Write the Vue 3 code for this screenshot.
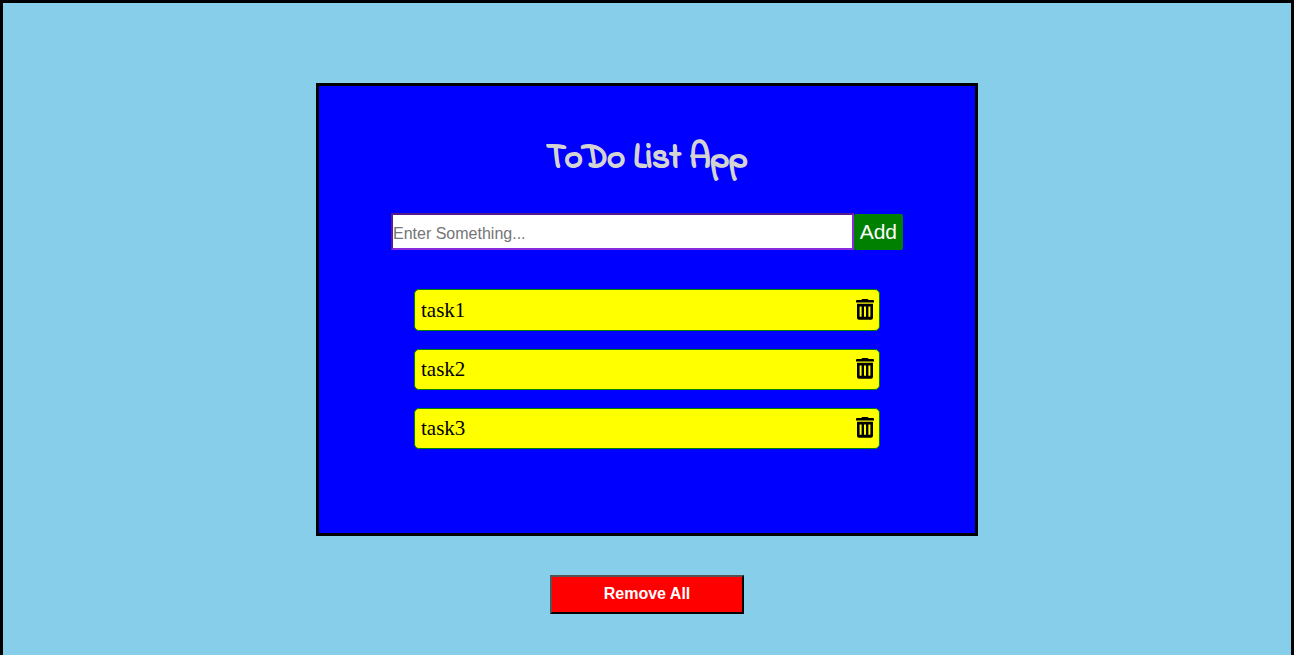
<script setup>
import { ref } from 'vue'

const draft = ref('')
const tasks = ref([
  { id: 1, name: 'task1' },
  { id: 2, name: 'task2' },
  { id: 3, name: 'task3' },
])
let nextId = 4

function addTask() {
  const name = draft.value.trim()
  if (!name) return
  tasks.value.push({ id: nextId++, name })
  draft.value = ''
}

function removeTask(id) {
  tasks.value = tasks.value.filter((task) => task.id !== id)
}

function removeAll() {
  tasks.value = []
}
</script>

<template>
  <main class="page">
    <section class="card">
      <h1 class="title">ToDo List App</h1>
      <form class="entry" @submit.prevent="addTask">
        <input v-model="draft" class="field" type="text" placeholder="Enter Something..." aria-label="New task" />
        <button class="add" type="submit">Add</button>
      </form>
      <ul class="tasks">
        <li v-for="task in tasks" :key="task.id" class="task">
          <span>{{ task.name }}</span>
          <button class="delete" type="button" :aria-label="'Delete ' + task.name" @click="removeTask(task.id)">
            <svg class="icon" viewBox="0 0 18 21" aria-hidden="true">
              <path d="M5.3 1 6.3 0h5.4l1 1H17a1 1 0 0 1 1 1v1.4H0V2a1 1 0 0 1 1-1z" />
              <path fill-rule="evenodd" d="M1 4.8h16v14a2 2 0 0 1-2 2H3a2 2 0 0 1-2-2zM3.6 7.4v10.4h2V7.4zM8 7.4v10.4h2V7.4zM12.4 7.4v10.4h2V7.4z" />
            </svg>
          </button>
        </li>
      </ul>
    </section>
    <button class="remove-all" type="button" @click="removeAll">Remove All</button>
  </main>
</template>

<style>
body {
  margin: 0;
}
</style>

<style scoped>
.page {
  box-sizing: border-box;
  min-height: 100vh;
  padding: 80px 16px 40px;
  border: 3px solid black;
  border-bottom: 0;
  background: skyblue;
  display: flex;
  flex-direction: column;
  align-items: center;
}

.card {
  box-sizing: border-box;
  width: 100%;
  max-width: 662px;
  padding: 49px 72px 84px;
  border: 3px solid black;
  background: blue;
}

.title {
  margin: 0 0 30px;
  color: lightgray;
  font-family: "Indie Flower", "Comic Sans MS", cursive;
  font-size: 34px;
  font-weight: 700;
  line-height: 48px;
  text-align: center;
  -webkit-text-stroke: 1px lightgray;
}

.entry {
  display: flex;
  align-items: flex-end;
}

.field {
  box-sizing: border-box;
  flex: 1;
  min-width: 0;
  height: 37px;
  padding: 4px 0 0;
  border: 2px inset blueviolet;
  border-radius: 0;
  outline: none;
  background: white;
  font: 16px "Liberation Sans", Arial, sans-serif;
}

.field::placeholder {
  color: #757575;
}

.add {
  height: 36px;
  padding: 0 6px;
  border: 0;
  border-radius: 2px;
  background: green;
  color: white;
  font: 21px "Liberation Sans", Arial, sans-serif;
}

.tasks {
  margin: 39px 23px 0;
  padding: 0;
  list-style: none;
  display: grid;
  gap: 18px;
}

.task {
  display: flex;
  align-items: center;
  justify-content: space-between;
  padding: 0 5px 0 6px;
  border: 1px solid green;
  border-radius: 5px;
  background: yellow;
  color: black;
  font: 21px/40px "Liberation Serif", "Times New Roman", serif;
}

.task + .task {
  line-height: 39px;
}

.delete {
  display: flex;
  padding: 0 0 2px;
  border: 0;
  background: none;
  color: black;
}

.icon {
  width: 18px;
  height: 21px;
  fill: currentColor;
}

.remove-all {
  width: 194px;
  height: 39px;
  margin-top: 39px;
  padding: 0 6px 2px;
  border: 2px outset black;
  border-radius: 0;
  background: red;
  color: white;
  font: bold 16px "Liberation Sans", Arial, sans-serif;
}

button {
  cursor: pointer;
}
</style>
